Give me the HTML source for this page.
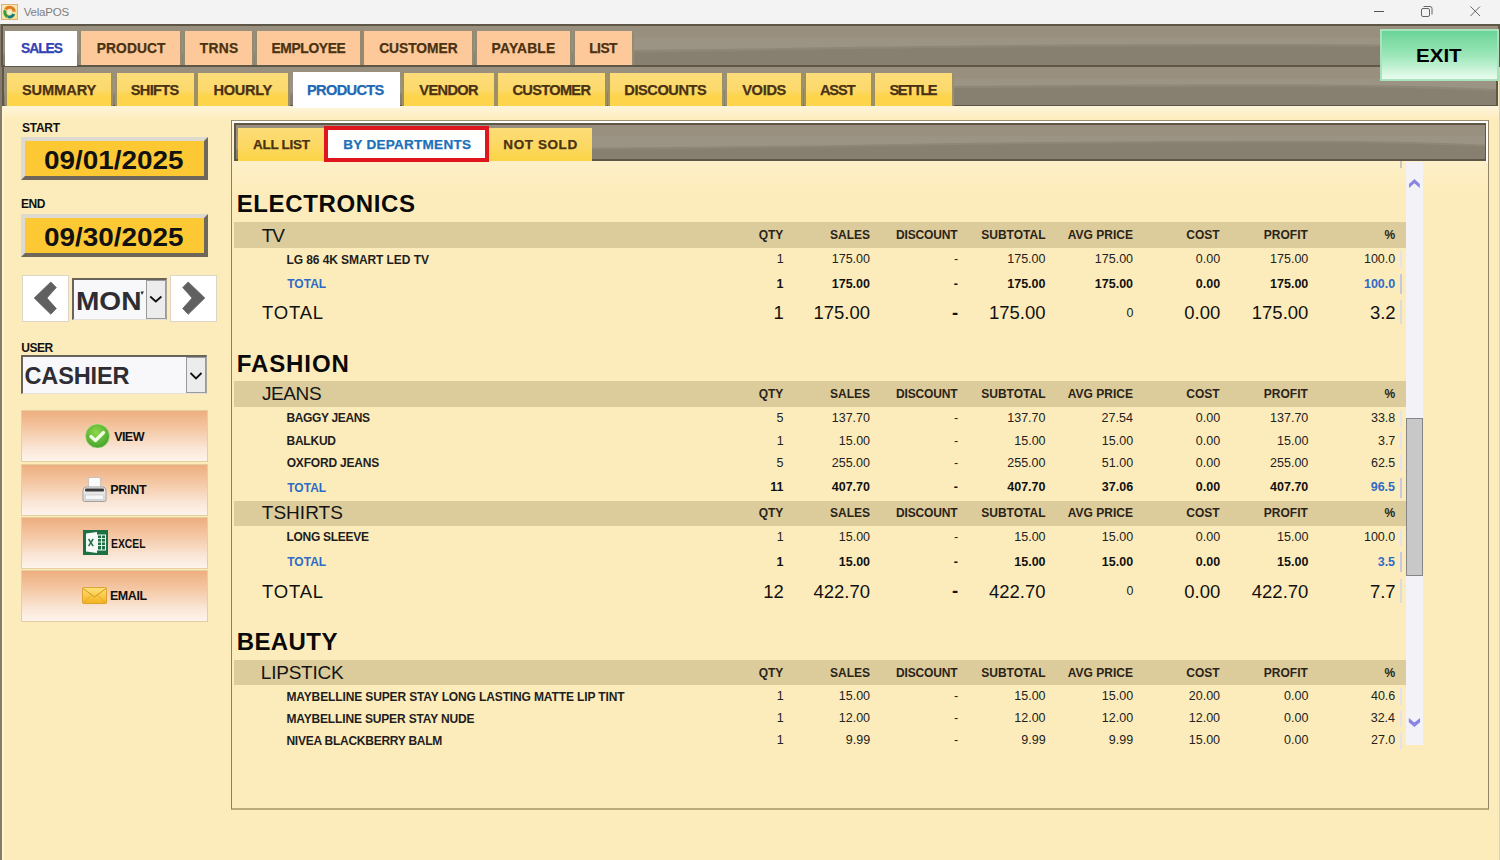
<!DOCTYPE html>
<html><head><meta charset="utf-8"><title>VelaPOS</title><style>
*{margin:0;padding:0;box-sizing:border-box}
html,body{width:1500px;height:860px;overflow:hidden}
body{position:relative;background:#fdecbb;font-family:'Liberation Sans', sans-serif}
</style></head>
<body>
<div style="position:absolute;left:0px;top:0px;width:1500px;height:24px;background:#f3f3f3"></div>
<svg style="position:absolute;left:1px;top:4px" width="17" height="16" viewBox="0 0 17 16">
<defs><linearGradient id="ig" x1="0" y1="0" x2="1" y2="1"><stop offset="0" stop-color="#fbe9c0"/><stop offset="1" stop-color="#f6dc8a"/></linearGradient></defs>
<rect x="0.5" y="0.5" width="16" height="15" fill="url(#ig)" stroke="#dcb27a" stroke-width="1"/>
<path d="M4.6 5.6 A4.6 4.6 0 0 1 13.2 7.6" fill="none" stroke="#e27c1e" stroke-width="3"/>
<path d="M12.8 10.2 A4.6 4.6 0 0 1 7.0 12.6" fill="none" stroke="#137a7a" stroke-width="3"/>
<path d="M6.8 12.6 A4.6 4.6 0 0 1 4.3 6.2" fill="none" stroke="#3a9a3a" stroke-width="3"/>
<circle cx="8.6" cy="8.4" r="1.6" fill="#e9f6ef"/>
</svg>
<div style="position:absolute;left:23.70px;top:7.27px;font:normal 11.5px/11.5px 'Liberation Sans', sans-serif;color:#808080;letter-spacing:-0.208px;white-space:nowrap;">VelaPOS</div>
<svg style="position:absolute;left:1360px;top:0px" width="140" height="24" viewBox="0 0 140 24">
<path d="M14 11.5 H24" stroke="#555" stroke-width="1"/>
<rect x="61.5" y="8.5" width="8" height="8" rx="1.5" fill="none" stroke="#666" stroke-width="1"/>
<path d="M63.5 6.5 H70 A2 2 0 0 1 72 8.5 V14.5" fill="none" stroke="#666" stroke-width="1"/>
<path d="M110.5 6.5 L120 16 M120 6.5 L110.5 16" stroke="#666" stroke-width="1"/>
</svg>
<div style="position:absolute;left:0px;top:24px;width:2px;height:836px;background:#867c6c"></div>
<div style="position:absolute;left:2px;top:106px;width:2px;height:754px;background:#fdf4d2"></div>
<div style="position:absolute;left:1499px;top:24px;width:1px;height:836px;background:#d8d0b8"></div>
<div style="position:absolute;left:4px;top:106px;width:1495px;height:14px;background:linear-gradient(to bottom,#fef5da,#fdecbb)"></div>
<div style="position:absolute;left:1px;top:24px;width:1499px;height:43px;overflow:hidden;border:2px solid #5e5646;border-bottom-width:2px"><svg width="100%" height="100%" viewBox="0 0 1000 100" preserveAspectRatio="none" style="position:absolute;left:0;top:0;display:block"><rect width="1000" height="100" fill="#9b9383"/><rect width="1000" height="30" fill="#988f7f"/><path d="M0 70 C200 70 350 66 500 58 C620 50 720 46 850 46 C920 46 970 52 1000 58 L1000 100 L0 100 Z" fill="#8f8776"/><path d="M0 76 C200 76 350 72 500 64 C620 56 720 52 850 52 C920 52 970 58 1000 64 L1000 100 L0 100 Z" fill="#877f6f"/></svg></div>
<div style="position:absolute;left:2px;top:66px;width:1496px;height:40px;overflow:hidden;border:2px solid #5e5646;border-top:1px solid #5e5646;border-bottom:1px solid #5e5646"><svg width="100%" height="100%" viewBox="0 0 1000 100" preserveAspectRatio="none" style="position:absolute;left:0;top:0;display:block"><rect width="1000" height="100" fill="#9b9383"/><rect width="1000" height="30" fill="#988f7f"/><path d="M0 70 C200 70 350 66 500 58 C620 50 720 46 850 46 C920 46 970 52 1000 58 L1000 100 L0 100 Z" fill="#8f8776"/><path d="M0 76 C200 76 350 72 500 64 C620 56 720 52 850 52 C920 52 970 58 1000 64 L1000 100 L0 100 Z" fill="#877f6f"/></svg></div>
<div style="position:absolute;left:5px;top:31px;width:72px;height:35px;background:#ffffff"></div>
<div style="position:absolute;left:21.10px;top:41.97px;font:bold 13.8px/13.8px 'Liberation Sans', sans-serif;color:#3242b4;letter-spacing:-1.050px;white-space:nowrap;-webkit-text-stroke:0.25px currentColor">SALES</div>
<div style="position:absolute;left:81px;top:31px;width:99px;height:34px;background:#fdc99a;box-shadow:2px 0 0 #968a6e,-2px 0 0 #968a6e"></div>
<div style="position:absolute;left:96.70px;top:41.97px;font:bold 13.8px/13.8px 'Liberation Sans', sans-serif;color:#4a3212;letter-spacing:0.100px;white-space:nowrap;-webkit-text-stroke:0.25px currentColor">PRODUCT</div>
<div style="position:absolute;left:185px;top:31px;width:67px;height:34px;background:#fdc99a;box-shadow:2px 0 0 #968a6e,-2px 0 0 #968a6e"></div>
<div style="position:absolute;left:199.75px;top:41.97px;font:bold 13.8px/13.8px 'Liberation Sans', sans-serif;color:#4a3212;letter-spacing:0.283px;white-space:nowrap;-webkit-text-stroke:0.25px currentColor">TRNS</div>
<div style="position:absolute;left:257px;top:31px;width:103px;height:34px;background:#fdc99a;box-shadow:2px 0 0 #968a6e,-2px 0 0 #968a6e"></div>
<div style="position:absolute;left:271.50px;top:41.97px;font:bold 13.8px/13.8px 'Liberation Sans', sans-serif;color:#4a3212;letter-spacing:-0.343px;white-space:nowrap;-webkit-text-stroke:0.25px currentColor">EMPLOYEE</div>
<div style="position:absolute;left:364px;top:31px;width:108px;height:34px;background:#fdc99a;box-shadow:2px 0 0 #968a6e,-2px 0 0 #968a6e"></div>
<div style="position:absolute;left:379.20px;top:41.97px;font:bold 13.8px/13.8px 'Liberation Sans', sans-serif;color:#4a3212;letter-spacing:-0.036px;white-space:nowrap;-webkit-text-stroke:0.25px currentColor">CUSTOMER</div>
<div style="position:absolute;left:477px;top:31px;width:93px;height:34px;background:#fdc99a;box-shadow:2px 0 0 #968a6e,-2px 0 0 #968a6e"></div>
<div style="position:absolute;left:491.60px;top:41.72px;font:bold 13.8px/13.8px 'Liberation Sans', sans-serif;color:#4a3212;letter-spacing:0.208px;white-space:nowrap;-webkit-text-stroke:0.25px currentColor">PAYABLE</div>
<div style="position:absolute;left:575px;top:31px;width:57px;height:34px;background:#fdc99a;box-shadow:2px 0 0 #968a6e,-2px 0 0 #968a6e"></div>
<div style="position:absolute;left:589.20px;top:41.97px;font:bold 13.8px/13.8px 'Liberation Sans', sans-serif;color:#4a3212;letter-spacing:-0.517px;white-space:nowrap;-webkit-text-stroke:0.25px currentColor">LIST</div>
<div style="position:absolute;left:7px;top:72.6px;width:104px;height:33.4px;background:linear-gradient(to bottom,#fddd7a 0%,#fcd96c 50%,#fdd449 72%,#fdd54c 100%);box-shadow:2px 0 0 #9d8f66,-2px 0 0 #9d8f66"></div>
<div style="position:absolute;left:21.90px;top:82.64px;font:bold 14.6px/14.6px 'Liberation Sans', sans-serif;color:#4a3212;letter-spacing:-0.067px;white-space:nowrap;-webkit-text-stroke:0.25px currentColor">SUMMARY</div>
<div style="position:absolute;left:117px;top:72.6px;width:77px;height:33.4px;background:linear-gradient(to bottom,#fddd7a 0%,#fcd96c 50%,#fdd449 72%,#fdd54c 100%);box-shadow:2px 0 0 #9d8f66,-2px 0 0 #9d8f66"></div>
<div style="position:absolute;left:130.80px;top:82.64px;font:bold 14.6px/14.6px 'Liberation Sans', sans-serif;color:#4a3212;letter-spacing:-0.670px;white-space:nowrap;-webkit-text-stroke:0.25px currentColor">SHIFTS</div>
<div style="position:absolute;left:198px;top:72.6px;width:90px;height:33.4px;background:linear-gradient(to bottom,#fddd7a 0%,#fcd96c 50%,#fdd449 72%,#fdd54c 100%);box-shadow:2px 0 0 #9d8f66,-2px 0 0 #9d8f66"></div>
<div style="position:absolute;left:213.40px;top:82.64px;font:bold 14.6px/14.6px 'Liberation Sans', sans-serif;color:#4a3212;letter-spacing:-0.280px;white-space:nowrap;-webkit-text-stroke:0.25px currentColor">HOURLY</div>
<div style="position:absolute;left:293px;top:72px;width:107px;height:36px;background:#ffffff"></div>
<div style="position:absolute;left:307.00px;top:82.64px;font:bold 14.6px/14.6px 'Liberation Sans', sans-serif;color:#2169b4;letter-spacing:-0.650px;white-space:nowrap;-webkit-text-stroke:0.25px currentColor">PRODUCTS</div>
<div style="position:absolute;left:404px;top:72.6px;width:90px;height:33.4px;background:linear-gradient(to bottom,#fddd7a 0%,#fcd96c 50%,#fdd449 72%,#fdd54c 100%);box-shadow:2px 0 0 #9d8f66,-2px 0 0 #9d8f66"></div>
<div style="position:absolute;left:419.35px;top:82.64px;font:bold 14.6px/14.6px 'Liberation Sans', sans-serif;color:#4a3212;letter-spacing:-0.650px;white-space:nowrap;-webkit-text-stroke:0.25px currentColor">VENDOR</div>
<div style="position:absolute;left:498px;top:72.6px;width:107px;height:33.4px;background:linear-gradient(to bottom,#fddd7a 0%,#fcd96c 50%,#fdd449 72%,#fdd54c 100%);box-shadow:2px 0 0 #9d8f66,-2px 0 0 #9d8f66"></div>
<div style="position:absolute;left:512.50px;top:82.64px;font:bold 14.6px/14.6px 'Liberation Sans', sans-serif;color:#4a3212;letter-spacing:-0.686px;white-space:nowrap;-webkit-text-stroke:0.25px currentColor">CUSTOMER</div>
<div style="position:absolute;left:610px;top:72.6px;width:112px;height:33.4px;background:linear-gradient(to bottom,#fddd7a 0%,#fcd96c 50%,#fdd449 72%,#fdd54c 100%);box-shadow:2px 0 0 #9d8f66,-2px 0 0 #9d8f66"></div>
<div style="position:absolute;left:624.30px;top:82.64px;font:bold 14.6px/14.6px 'Liberation Sans', sans-serif;color:#4a3212;letter-spacing:-0.438px;white-space:nowrap;-webkit-text-stroke:0.25px currentColor">DISCOUNTS</div>
<div style="position:absolute;left:727px;top:72.6px;width:74px;height:33.4px;background:linear-gradient(to bottom,#fddd7a 0%,#fcd96c 50%,#fdd449 72%,#fdd54c 100%);box-shadow:2px 0 0 #9d8f66,-2px 0 0 #9d8f66"></div>
<div style="position:absolute;left:742.15px;top:82.64px;font:bold 14.6px/14.6px 'Liberation Sans', sans-serif;color:#4a3212;letter-spacing:-0.300px;white-space:nowrap;-webkit-text-stroke:0.25px currentColor">VOIDS</div>
<div style="position:absolute;left:806px;top:72.6px;width:65px;height:33.4px;background:linear-gradient(to bottom,#fddd7a 0%,#fcd96c 50%,#fdd449 72%,#fdd54c 100%);box-shadow:2px 0 0 #9d8f66,-2px 0 0 #9d8f66"></div>
<div style="position:absolute;left:819.90px;top:82.64px;font:bold 14.6px/14.6px 'Liberation Sans', sans-serif;color:#4a3212;letter-spacing:-1.083px;white-space:nowrap;-webkit-text-stroke:0.25px currentColor">ASST</div>
<div style="position:absolute;left:875px;top:72.6px;width:77px;height:33.4px;background:linear-gradient(to bottom,#fddd7a 0%,#fcd96c 50%,#fdd449 72%,#fdd54c 100%);box-shadow:2px 0 0 #9d8f66,-2px 0 0 #9d8f66"></div>
<div style="position:absolute;left:889.60px;top:82.64px;font:bold 14.6px/14.6px 'Liberation Sans', sans-serif;color:#4a3212;letter-spacing:-1.600px;white-space:nowrap;-webkit-text-stroke:0.25px currentColor">SETTLE</div>
<div style="position:absolute;left:1380px;top:29px;width:119px;height:52px;background:linear-gradient(to bottom,#6ad497 0%,#9be6b7 50%,#e9fcef 100%);border:2px solid #a8e3bd"></div>
<div style="position:absolute;left:1416.43px;top:47.64px;font:bold 17.5px/17.5px 'Liberation Sans', sans-serif;color:#000;letter-spacing:0.000px;white-space:nowrap;transform:scaleX(1.1733);transform-origin:0 0;">EXIT</div>
<div style="position:absolute;left:22.00px;top:121.64px;font:bold 12px/12px 'Liberation Sans', sans-serif;color:#111;letter-spacing:-0.250px;white-space:nowrap;">START</div>
<div style="position:absolute;left:21px;top:136.5px;width:187px;height:43px;background:#fcc935;border-top:4px solid #dedad0;border-left:4px solid #dedad0;border-bottom:4px solid #6f685a;border-right:4px solid #6f685a"></div>
<div style="position:absolute;left:44.21px;top:147.91px;font:bold 25.5px/25.5px 'Liberation Sans', sans-serif;color:#111;letter-spacing:0.000px;white-space:nowrap;transform:scaleX(1.0937);transform-origin:0 0;">09/01/2025</div>
<div style="position:absolute;left:21.05px;top:197.69px;font:bold 12px/12px 'Liberation Sans', sans-serif;color:#111;letter-spacing:-0.500px;white-space:nowrap;">END</div>
<div style="position:absolute;left:21px;top:213.5px;width:187px;height:43px;background:#fcc935;border-top:4px solid #dedad0;border-left:4px solid #dedad0;border-bottom:4px solid #6f685a;border-right:4px solid #6f685a"></div>
<div style="position:absolute;left:44.21px;top:224.51px;font:bold 25.5px/25.5px 'Liberation Sans', sans-serif;color:#111;letter-spacing:0.000px;white-space:nowrap;transform:scaleX(1.0937);transform-origin:0 0;">09/30/2025</div>
<div style="position:absolute;left:22px;top:275px;width:47px;height:47px;background:#fff;border:1px solid #ddd6c6"></div>
<svg style="position:absolute;left:22px;top:275px" width="47" height="47" viewBox="0 0 47 47"><path d="M28.8 7 L34.3 12.5 L24.9 23 L34.3 33.5 L28.8 39.3 L12.2 23 Z" fill="#606060" stroke="#606060" stroke-width="0.8" stroke-linejoin="round"/></svg>
<div style="position:absolute;left:170px;top:275px;width:47px;height:47px;background:#fff;border:1px solid #ddd6c6"></div>
<svg style="position:absolute;left:170px;top:275px" width="47" height="47" viewBox="0 0 47 47"><path d="M18.2 7 L12.7 12.5 L22.1 23 L12.7 33.5 L18.2 39.3 L34.8 23 Z" fill="#606060" stroke="#606060" stroke-width="0.8" stroke-linejoin="round"/></svg>
<div style="position:absolute;left:72px;top:278px;width:95px;height:42px;background:#f8f8fa;border-top:2px solid #68645c;border-left:2px solid #68645c;border-right:1px solid #a9a59b;border-bottom:1px solid #e5e1d6;overflow:hidden"></div>
<div style="position:absolute;left:76.07px;top:288.90px;font:bold 25.4px/25.4px 'Liberation Sans', sans-serif;color:#2d2d33;letter-spacing:0.000px;white-space:nowrap;transform:scaleX(1.1049);transform-origin:0 0;">MON</div>
<svg style="position:absolute;left:140px;top:291px" width="6" height="6" viewBox="0 0 6 6"><path d="M0.5 0.5 H4 L2 4 Z" fill="#2d2d33"/></svg>
<div style="position:absolute;left:146px;top:280px;width:20px;height:39px;background:#ececec;border:1px solid #9a9a9a"></div>
<svg style="position:absolute;left:146px;top:280px" width="20" height="39" viewBox="0 0 20 39"><path d="M4.2 16.5 L9.8 21.5 L15.4 16.5" fill="none" stroke="#111" stroke-width="1.8"/></svg>
<div style="position:absolute;left:21.25px;top:341.74px;font:bold 12px/12px 'Liberation Sans', sans-serif;color:#111;letter-spacing:-0.483px;white-space:nowrap;">USER</div>
<div style="position:absolute;left:21px;top:355px;width:186px;height:39px;background:#f8f8fa;border-top:2px solid #68645c;border-left:2px solid #68645c;border-right:1px solid #a9a59b;border-bottom:1px solid #e5e1d6"></div>
<div style="position:absolute;left:24.50px;top:365.11px;font:bold 23.5px/23.5px 'Liberation Sans', sans-serif;color:#2d2d33;letter-spacing:-0.125px;white-space:nowrap;">CASHIER</div>
<div style="position:absolute;left:186px;top:357px;width:20px;height:36px;background:#ececec;border:1px solid #9a9a9a"></div>
<svg style="position:absolute;left:186px;top:357px" width="20" height="36" viewBox="0 0 20 36"><path d="M4.5 16 L10 21.5 L15.5 16" fill="none" stroke="#111" stroke-width="1.8"/></svg>
<div style="position:absolute;left:21px;top:410px;width:187px;height:52px;background:linear-gradient(to bottom,#eeae80 0%,#f4c7a3 35%,#fae6d6 75%,#fdf4ec 100%);border:1px solid #e6cf9f"></div>
<div style="position:absolute;left:21px;top:464px;width:187px;height:52px;background:linear-gradient(to bottom,#eeae80 0%,#f4c7a3 35%,#fae6d6 75%,#fdf4ec 100%);border:1px solid #e6cf9f"></div>
<div style="position:absolute;left:21px;top:517px;width:187px;height:52px;background:linear-gradient(to bottom,#eeae80 0%,#f4c7a3 35%,#fae6d6 75%,#fdf4ec 100%);border:1px solid #e6cf9f"></div>
<div style="position:absolute;left:21px;top:570px;width:187px;height:52px;background:linear-gradient(to bottom,#eeae80 0%,#f4c7a3 35%,#fae6d6 75%,#fdf4ec 100%);border:1px solid #e6cf9f"></div>
<svg style="position:absolute;left:84px;top:423px" width="27" height="27" viewBox="0 0 27 27">
<defs><radialGradient id="gc" cx="0.45" cy="0.35" r="0.7"><stop offset="0" stop-color="#8fd84a"/><stop offset="1" stop-color="#3f9f2b"/></radialGradient></defs>
<circle cx="13.5" cy="13" r="12" fill="url(#gc)" stroke="#c9e9a0" stroke-width="0.6"/>
<path d="M7 13.5 L11.5 17.5 L19.5 9.5" fill="none" stroke="#f4ffe8" stroke-width="3.2" stroke-linecap="round" stroke-linejoin="round"/>
</svg>
<div style="position:absolute;left:114.20px;top:430.87px;font:bold 12.5px/12.5px 'Liberation Sans', sans-serif;color:#111;letter-spacing:-0.567px;white-space:nowrap;">VIEW</div>
<svg style="position:absolute;left:81px;top:476px" width="27" height="27" viewBox="0 0 27 27">
<defs><linearGradient id="pg" x1="0" y1="0" x2="0" y2="1"><stop offset="0" stop-color="#f2f2f2"/><stop offset="1" stop-color="#d6d6d6"/></linearGradient></defs>
<path d="M7.5 12 V3 Q7.5 1.5 9 1.5 H18 Q19.5 1.5 19.5 3 V12 Z" fill="#fbfbfb" stroke="#bdbdbd" stroke-width="0.8"/>
<path d="M2 15 Q2 11 5 11 H22 Q25 11 25 15 V24 Q25 25.5 23.5 25.5 H3.5 Q2 25.5 2 24 Z" fill="url(#pg)" stroke="#9a9a9a" stroke-width="0.9"/>
<rect x="4" y="12.5" width="19" height="3" rx="1" fill="#3a3a3a"/>
<rect x="4.5" y="19" width="18" height="4.5" fill="#f7f7f7" stroke="#c4c4c4" stroke-width="0.6"/>
</svg>
<div style="position:absolute;left:110.15px;top:484.37px;font:bold 12.5px/12.5px 'Liberation Sans', sans-serif;color:#111;letter-spacing:-0.238px;white-space:nowrap;">PRINT</div>
<svg style="position:absolute;left:83px;top:530px" width="26" height="25" viewBox="0 0 26 25">
<rect x="0" y="0" width="25" height="25" fill="#1e7145"/>
<path d="M3 3.5 L14 2 V23 L3 21.5 Z" fill="#f6fbf7"/>
<path d="M5.6 9 L10.2 16.2 M10.2 9 L5.6 16.2" stroke="#1e7145" stroke-width="1.5"/>
<rect x="14.5" y="5" width="8" height="15" fill="none" stroke="#f6fbf7" stroke-width="1"/>
<path d="M18.5 5 V20 M14.5 8.5 H22.5 M14.5 12 H22.5 M14.5 15.5 H22.5" stroke="#f6fbf7" stroke-width="0.9"/>
</svg>
<div style="position:absolute;left:111.27px;top:537.79px;font:bold 12.3px/12.3px 'Liberation Sans', sans-serif;color:#111;letter-spacing:0.000px;white-space:nowrap;transform:scaleX(0.8425);transform-origin:0 0;">EXCEL</div>
<svg style="position:absolute;left:82px;top:587px" width="25" height="17" viewBox="0 0 25 17">
<defs><linearGradient id="eg" x1="0" y1="0" x2="0" y2="1"><stop offset="0" stop-color="#fde37a"/><stop offset="1" stop-color="#f3b21c"/></linearGradient></defs>
<rect x="0.5" y="0.5" width="24" height="16" rx="1" fill="url(#eg)" stroke="#d9981a" stroke-width="0.8"/>
<path d="M1 1.5 L12.5 10 L24 1.5" fill="none" stroke="#d08e14" stroke-width="0.9"/>
<path d="M1 16 L9.5 8.5 M24 16 L15.5 8.5" fill="none" stroke="#e2a52a" stroke-width="0.7"/>
</svg>
<div style="position:absolute;left:109.95px;top:590.17px;font:bold 12.5px/12.5px 'Liberation Sans', sans-serif;color:#111;letter-spacing:-0.438px;white-space:nowrap;">EMAIL</div>
<div style="position:absolute;left:231px;top:120px;width:1258px;height:690px;border:1px solid #9c9170;border-left-color:#8e8158;border-right-color:#8f8566;border-bottom:2px solid #bcab7a;background:linear-gradient(to bottom,#fdf5dc 0px,#fdecbb 70px)"></div>
<div style="position:absolute;left:232px;top:121px;width:1256px;height:2px;background:#ffffff"></div>
<div style="position:absolute;left:1486px;top:121px;width:2px;height:42px;background:#fffdf6"></div>
<div style="position:absolute;left:234px;top:123px;width:1252px;height:38px;overflow:hidden;border:2px solid #5e5646;border-right-width:1px"><svg width="100%" height="100%" viewBox="0 0 1000 100" preserveAspectRatio="none" style="position:absolute;left:0;top:0;display:block"><rect width="1000" height="100" fill="#9b9383"/><rect width="1000" height="30" fill="#988f7f"/><path d="M0 70 C200 70 350 66 500 58 C620 50 720 46 850 46 C920 46 970 52 1000 58 L1000 100 L0 100 Z" fill="#8f8776"/><path d="M0 76 C200 76 350 72 500 64 C620 56 720 52 850 52 C920 52 970 58 1000 64 L1000 100 L0 100 Z" fill="#877f6f"/></svg></div>
<div style="position:absolute;left:238px;top:128px;width:86px;height:33px;background:linear-gradient(to bottom,#fcdc78 0%,#fcd862 55%,#fdd445 100%)"></div>
<div style="position:absolute;left:252.95px;top:137.87px;font:bold 13.5px/13.5px 'Liberation Sans', sans-serif;color:#4a3212;letter-spacing:-0.279px;white-space:nowrap;-webkit-text-stroke:0.25px currentColor">ALL LIST</div>
<div style="position:absolute;left:324px;top:126px;width:165px;height:36px;background:#fff;border:4px solid #e0161e"></div>
<div style="position:absolute;left:343.30px;top:137.87px;font:bold 13.5px/13.5px 'Liberation Sans', sans-serif;color:#2070b8;letter-spacing:0.281px;white-space:nowrap;-webkit-text-stroke:0.25px currentColor">BY DEPARTMENTS</div>
<div style="position:absolute;left:489px;top:128px;width:103px;height:33px;background:linear-gradient(to bottom,#fcdc78 0%,#fcd862 55%,#fdd445 100%)"></div>
<div style="position:absolute;left:503.30px;top:137.87px;font:bold 13.5px/13.5px 'Liberation Sans', sans-serif;color:#4a3212;letter-spacing:0.593px;white-space:nowrap;-webkit-text-stroke:0.25px currentColor">NOT SOLD</div>
<div style="position:absolute;left:1406px;top:162px;width:17px;height:583px;background:#f3f2f6"></div>
<svg style="position:absolute;left:1406px;top:175px" width="17" height="16" viewBox="0 0 17 16"><path d="M3 9 L8.4 4 L13.8 9 L13.8 13 L8.4 8.3 L3 13 Z" fill="#8a85e2"/></svg>
<svg style="position:absolute;left:1406px;top:712px" width="17" height="16" viewBox="0 0 17 16"><path d="M2.8 6.1 L8.4 10.6 L14.1 6.1 L14.1 10.3 L8.4 14.9 L2.8 10.3 Z" fill="#8a85e2"/></svg>
<div style="position:absolute;left:1406px;top:418px;width:17px;height:158px;background:#c8c8c8;border:1px solid #858585"></div>
<div style="position:absolute;left:1400px;top:161px;width:2px;height:7px;background:#cfc8b4"></div>
<div style="position:absolute;left:236.70px;top:192.33px;font:bold 24px/24px 'Liberation Sans', sans-serif;color:#0a0a0a;letter-spacing:0.620px;white-space:nowrap;">ELECTRONICS</div>
<div style="position:absolute;left:234px;top:222.2px;width:1172px;height:25.5px;background:#dccb9b"></div>
<div style="position:absolute;left:261.80px;top:225.67px;font:normal 19px/19px 'Liberation Sans', sans-serif;color:#141414;letter-spacing:-1.050px;white-space:nowrap;">TV</div>
<div style="position:absolute;left:758.80px;top:228.94px;font:bold 12px/12px 'Liberation Sans', sans-serif;color:#2a2418;letter-spacing:-0.150px;white-space:nowrap;">QTY</div>
<div style="position:absolute;left:830.00px;top:228.94px;font:bold 12px/12px 'Liberation Sans', sans-serif;color:#2a2418;letter-spacing:0.000px;white-space:nowrap;">SALES</div>
<div style="position:absolute;left:895.95px;top:228.94px;font:bold 12px/12px 'Liberation Sans', sans-serif;color:#2a2418;letter-spacing:-0.136px;white-space:nowrap;">DISCOUNT</div>
<div style="position:absolute;left:981.25px;top:228.94px;font:bold 12px/12px 'Liberation Sans', sans-serif;color:#2a2418;letter-spacing:0.000px;white-space:nowrap;">SUBTOTAL</div>
<div style="position:absolute;left:1067.85px;top:228.94px;font:bold 12px/12px 'Liberation Sans', sans-serif;color:#2a2418;letter-spacing:0.000px;white-space:nowrap;">AVG PRICE</div>
<div style="position:absolute;left:1186.25px;top:228.94px;font:bold 12px/12px 'Liberation Sans', sans-serif;color:#2a2418;letter-spacing:0.000px;white-space:nowrap;">COST</div>
<div style="position:absolute;left:1263.80px;top:228.94px;font:bold 12px/12px 'Liberation Sans', sans-serif;color:#2a2418;letter-spacing:0.000px;white-space:nowrap;">PROFIT</div>
<div style="position:absolute;left:1384.45px;top:228.94px;font:bold 12px/12px 'Liberation Sans', sans-serif;color:#2a2418;letter-spacing:0.000px;white-space:nowrap;">%</div>
<div style="position:absolute;left:286.45px;top:253.64px;font:bold 12px/12px 'Liberation Sans', sans-serif;color:#1e1e1e;letter-spacing:-0.078px;white-space:nowrap;">LG 86 4K SMART LED TV</div>
<div style="position:absolute;left:776.75px;top:253.12px;font:normal 12.5px/12.5px 'Liberation Sans', sans-serif;color:#222;letter-spacing:0.000px;white-space:nowrap;">1</div>
<div style="position:absolute;left:831.75px;top:253.12px;font:normal 12.5px/12.5px 'Liberation Sans', sans-serif;color:#222;letter-spacing:0.000px;white-space:nowrap;">175.00</div>
<div style="position:absolute;left:954.00px;top:253.12px;font:normal 12.5px/12.5px 'Liberation Sans', sans-serif;color:#222;letter-spacing:0.000px;white-space:nowrap;">-</div>
<div style="position:absolute;left:1007.25px;top:253.12px;font:normal 12.5px/12.5px 'Liberation Sans', sans-serif;color:#222;letter-spacing:0.000px;white-space:nowrap;">175.00</div>
<div style="position:absolute;left:1094.85px;top:253.12px;font:normal 12.5px/12.5px 'Liberation Sans', sans-serif;color:#222;letter-spacing:0.000px;white-space:nowrap;">175.00</div>
<div style="position:absolute;left:1195.75px;top:253.12px;font:normal 12.5px/12.5px 'Liberation Sans', sans-serif;color:#222;letter-spacing:0.000px;white-space:nowrap;">0.00</div>
<div style="position:absolute;left:1270.05px;top:253.12px;font:normal 12.5px/12.5px 'Liberation Sans', sans-serif;color:#222;letter-spacing:0.000px;white-space:nowrap;">175.00</div>
<div style="position:absolute;left:1363.95px;top:253.12px;font:normal 12.5px/12.5px 'Liberation Sans', sans-serif;color:#222;letter-spacing:0.000px;white-space:nowrap;">100.0</div>
<div style="position:absolute;left:1400px;top:250.7px;width:2px;height:17px;background:#e3e2ee"></div>
<div style="position:absolute;left:287.20px;top:278.24px;font:bold 12px/12px 'Liberation Sans', sans-serif;color:#2f6bc6;letter-spacing:0.025px;white-space:nowrap;">TOTAL</div>
<div style="position:absolute;left:776.50px;top:277.72px;font:bold 12.5px/12.5px 'Liberation Sans', sans-serif;color:#111;letter-spacing:0.000px;white-space:nowrap;">1</div>
<div style="position:absolute;left:831.75px;top:277.72px;font:bold 12.5px/12.5px 'Liberation Sans', sans-serif;color:#111;letter-spacing:0.000px;white-space:nowrap;">175.00</div>
<div style="position:absolute;left:953.75px;top:277.72px;font:bold 12.5px/12.5px 'Liberation Sans', sans-serif;color:#111;letter-spacing:0.000px;white-space:nowrap;">-</div>
<div style="position:absolute;left:1007.25px;top:277.72px;font:bold 12.5px/12.5px 'Liberation Sans', sans-serif;color:#111;letter-spacing:0.000px;white-space:nowrap;">175.00</div>
<div style="position:absolute;left:1094.85px;top:277.72px;font:bold 12.5px/12.5px 'Liberation Sans', sans-serif;color:#111;letter-spacing:0.000px;white-space:nowrap;">175.00</div>
<div style="position:absolute;left:1195.75px;top:277.72px;font:bold 12.5px/12.5px 'Liberation Sans', sans-serif;color:#111;letter-spacing:0.000px;white-space:nowrap;">0.00</div>
<div style="position:absolute;left:1270.05px;top:277.72px;font:bold 12.5px/12.5px 'Liberation Sans', sans-serif;color:#111;letter-spacing:0.000px;white-space:nowrap;">175.00</div>
<div style="position:absolute;left:1363.95px;top:277.72px;font:bold 12.5px/12.5px 'Liberation Sans', sans-serif;color:#2f6bc6;letter-spacing:0.000px;white-space:nowrap;">100.0</div>
<div style="position:absolute;left:1400px;top:274.3px;width:2px;height:20px;background:#c7c6e3"></div>
<div style="position:absolute;left:262.00px;top:304.24px;font:normal 18.5px/18.5px 'Liberation Sans', sans-serif;color:#111;letter-spacing:0.812px;white-space:nowrap;">TOTAL</div>
<div style="position:absolute;left:773.50px;top:304.49px;font:normal 18.5px/18.5px 'Liberation Sans', sans-serif;color:#111;letter-spacing:0.000px;white-space:nowrap;">1</div>
<div style="position:absolute;left:813.50px;top:304.49px;font:normal 18.5px/18.5px 'Liberation Sans', sans-serif;color:#111;letter-spacing:0.000px;white-space:nowrap;">175.00</div>
<div style="position:absolute;left:952.00px;top:303.79px;font:bold 18.5px/18.5px 'Liberation Sans', sans-serif;color:#111;letter-spacing:0.000px;white-space:nowrap;">-</div>
<div style="position:absolute;left:989.00px;top:304.49px;font:normal 18.5px/18.5px 'Liberation Sans', sans-serif;color:#111;letter-spacing:0.000px;white-space:nowrap;">175.00</div>
<div style="position:absolute;left:1125.60px;top:305.87px;font:normal 13.5px/13.5px 'Liberation Sans', sans-serif;color:#222;letter-spacing:0.000px;white-space:nowrap;transform:scaleX(0.92);transform-origin:right">0</div>
<div style="position:absolute;left:1184.25px;top:304.49px;font:normal 18.5px/18.5px 'Liberation Sans', sans-serif;color:#111;letter-spacing:0.000px;white-space:nowrap;">0.00</div>
<div style="position:absolute;left:1251.80px;top:304.49px;font:normal 18.5px/18.5px 'Liberation Sans', sans-serif;color:#111;letter-spacing:0.000px;white-space:nowrap;">175.00</div>
<div style="position:absolute;left:1369.95px;top:304.49px;font:normal 18.5px/18.5px 'Liberation Sans', sans-serif;color:#111;letter-spacing:0.000px;white-space:nowrap;">3.2</div>
<div style="position:absolute;left:1400px;top:300.2px;width:2px;height:24px;background:#dcdadf"></div>
<div style="position:absolute;left:236.70px;top:352.23px;font:bold 24px/24px 'Liberation Sans', sans-serif;color:#0a0a0a;letter-spacing:0.917px;white-space:nowrap;">FASHION</div>
<div style="position:absolute;left:234px;top:381.3px;width:1172px;height:25.5px;background:#dccb9b"></div>
<div style="position:absolute;left:262.05px;top:384.17px;font:normal 19px/19px 'Liberation Sans', sans-serif;color:#141414;letter-spacing:-0.425px;white-space:nowrap;">JEANS</div>
<div style="position:absolute;left:758.80px;top:388.04px;font:bold 12px/12px 'Liberation Sans', sans-serif;color:#2a2418;letter-spacing:-0.150px;white-space:nowrap;">QTY</div>
<div style="position:absolute;left:830.00px;top:388.04px;font:bold 12px/12px 'Liberation Sans', sans-serif;color:#2a2418;letter-spacing:0.000px;white-space:nowrap;">SALES</div>
<div style="position:absolute;left:895.95px;top:388.04px;font:bold 12px/12px 'Liberation Sans', sans-serif;color:#2a2418;letter-spacing:-0.136px;white-space:nowrap;">DISCOUNT</div>
<div style="position:absolute;left:981.25px;top:388.04px;font:bold 12px/12px 'Liberation Sans', sans-serif;color:#2a2418;letter-spacing:0.000px;white-space:nowrap;">SUBTOTAL</div>
<div style="position:absolute;left:1067.85px;top:388.04px;font:bold 12px/12px 'Liberation Sans', sans-serif;color:#2a2418;letter-spacing:0.000px;white-space:nowrap;">AVG PRICE</div>
<div style="position:absolute;left:1186.25px;top:388.04px;font:bold 12px/12px 'Liberation Sans', sans-serif;color:#2a2418;letter-spacing:0.000px;white-space:nowrap;">COST</div>
<div style="position:absolute;left:1263.80px;top:388.04px;font:bold 12px/12px 'Liberation Sans', sans-serif;color:#2a2418;letter-spacing:0.000px;white-space:nowrap;">PROFIT</div>
<div style="position:absolute;left:1384.45px;top:388.04px;font:bold 12px/12px 'Liberation Sans', sans-serif;color:#2a2418;letter-spacing:0.000px;white-space:nowrap;">%</div>
<div style="position:absolute;left:286.45px;top:412.44px;font:bold 12px/12px 'Liberation Sans', sans-serif;color:#1e1e1e;letter-spacing:-0.355px;white-space:nowrap;">BAGGY JEANS</div>
<div style="position:absolute;left:776.50px;top:411.92px;font:normal 12.5px/12.5px 'Liberation Sans', sans-serif;color:#222;letter-spacing:0.000px;white-space:nowrap;">5</div>
<div style="position:absolute;left:831.75px;top:411.92px;font:normal 12.5px/12.5px 'Liberation Sans', sans-serif;color:#222;letter-spacing:0.000px;white-space:nowrap;">137.70</div>
<div style="position:absolute;left:954.00px;top:411.92px;font:normal 12.5px/12.5px 'Liberation Sans', sans-serif;color:#222;letter-spacing:0.000px;white-space:nowrap;">-</div>
<div style="position:absolute;left:1007.25px;top:411.92px;font:normal 12.5px/12.5px 'Liberation Sans', sans-serif;color:#222;letter-spacing:0.000px;white-space:nowrap;">137.70</div>
<div style="position:absolute;left:1101.60px;top:411.92px;font:normal 12.5px/12.5px 'Liberation Sans', sans-serif;color:#222;letter-spacing:0.000px;white-space:nowrap;">27.54</div>
<div style="position:absolute;left:1195.75px;top:411.92px;font:normal 12.5px/12.5px 'Liberation Sans', sans-serif;color:#222;letter-spacing:0.000px;white-space:nowrap;">0.00</div>
<div style="position:absolute;left:1270.05px;top:411.92px;font:normal 12.5px/12.5px 'Liberation Sans', sans-serif;color:#222;letter-spacing:0.000px;white-space:nowrap;">137.70</div>
<div style="position:absolute;left:1370.95px;top:411.92px;font:normal 12.5px/12.5px 'Liberation Sans', sans-serif;color:#222;letter-spacing:0.000px;white-space:nowrap;">33.8</div>
<div style="position:absolute;left:1400px;top:409.5px;width:2px;height:17px;background:#e3e2ee"></div>
<div style="position:absolute;left:286.45px;top:434.89px;font:bold 12px/12px 'Liberation Sans', sans-serif;color:#1e1e1e;letter-spacing:-0.220px;white-space:nowrap;">BALKUD</div>
<div style="position:absolute;left:776.75px;top:434.62px;font:normal 12.5px/12.5px 'Liberation Sans', sans-serif;color:#222;letter-spacing:0.000px;white-space:nowrap;">1</div>
<div style="position:absolute;left:838.75px;top:434.62px;font:normal 12.5px/12.5px 'Liberation Sans', sans-serif;color:#222;letter-spacing:0.000px;white-space:nowrap;">15.00</div>
<div style="position:absolute;left:954.00px;top:434.62px;font:normal 12.5px/12.5px 'Liberation Sans', sans-serif;color:#222;letter-spacing:0.000px;white-space:nowrap;">-</div>
<div style="position:absolute;left:1014.25px;top:434.62px;font:normal 12.5px/12.5px 'Liberation Sans', sans-serif;color:#222;letter-spacing:0.000px;white-space:nowrap;">15.00</div>
<div style="position:absolute;left:1101.85px;top:434.62px;font:normal 12.5px/12.5px 'Liberation Sans', sans-serif;color:#222;letter-spacing:0.000px;white-space:nowrap;">15.00</div>
<div style="position:absolute;left:1195.75px;top:434.62px;font:normal 12.5px/12.5px 'Liberation Sans', sans-serif;color:#222;letter-spacing:0.000px;white-space:nowrap;">0.00</div>
<div style="position:absolute;left:1277.05px;top:434.62px;font:normal 12.5px/12.5px 'Liberation Sans', sans-serif;color:#222;letter-spacing:0.000px;white-space:nowrap;">15.00</div>
<div style="position:absolute;left:1377.95px;top:434.62px;font:normal 12.5px/12.5px 'Liberation Sans', sans-serif;color:#222;letter-spacing:0.000px;white-space:nowrap;">3.7</div>
<div style="position:absolute;left:1400px;top:432.2px;width:2px;height:17px;background:#e3e2ee"></div>
<div style="position:absolute;left:286.70px;top:457.04px;font:bold 12px/12px 'Liberation Sans', sans-serif;color:#1e1e1e;letter-spacing:-0.186px;white-space:nowrap;">OXFORD JEANS</div>
<div style="position:absolute;left:776.50px;top:456.52px;font:normal 12.5px/12.5px 'Liberation Sans', sans-serif;color:#222;letter-spacing:0.000px;white-space:nowrap;">5</div>
<div style="position:absolute;left:831.75px;top:456.52px;font:normal 12.5px/12.5px 'Liberation Sans', sans-serif;color:#222;letter-spacing:0.000px;white-space:nowrap;">255.00</div>
<div style="position:absolute;left:954.00px;top:456.52px;font:normal 12.5px/12.5px 'Liberation Sans', sans-serif;color:#222;letter-spacing:0.000px;white-space:nowrap;">-</div>
<div style="position:absolute;left:1007.25px;top:456.52px;font:normal 12.5px/12.5px 'Liberation Sans', sans-serif;color:#222;letter-spacing:0.000px;white-space:nowrap;">255.00</div>
<div style="position:absolute;left:1101.85px;top:456.52px;font:normal 12.5px/12.5px 'Liberation Sans', sans-serif;color:#222;letter-spacing:0.000px;white-space:nowrap;">51.00</div>
<div style="position:absolute;left:1195.75px;top:456.52px;font:normal 12.5px/12.5px 'Liberation Sans', sans-serif;color:#222;letter-spacing:0.000px;white-space:nowrap;">0.00</div>
<div style="position:absolute;left:1270.05px;top:456.52px;font:normal 12.5px/12.5px 'Liberation Sans', sans-serif;color:#222;letter-spacing:0.000px;white-space:nowrap;">255.00</div>
<div style="position:absolute;left:1370.95px;top:456.52px;font:normal 12.5px/12.5px 'Liberation Sans', sans-serif;color:#222;letter-spacing:0.000px;white-space:nowrap;">62.5</div>
<div style="position:absolute;left:1400px;top:454.1px;width:2px;height:17px;background:#e3e2ee"></div>
<div style="position:absolute;left:287.20px;top:481.94px;font:bold 12px/12px 'Liberation Sans', sans-serif;color:#2f6bc6;letter-spacing:0.025px;white-space:nowrap;">TOTAL</div>
<div style="position:absolute;left:770.25px;top:481.42px;font:bold 12.5px/12.5px 'Liberation Sans', sans-serif;color:#111;letter-spacing:0.000px;white-space:nowrap;">11</div>
<div style="position:absolute;left:831.75px;top:481.42px;font:bold 12.5px/12.5px 'Liberation Sans', sans-serif;color:#111;letter-spacing:0.000px;white-space:nowrap;">407.70</div>
<div style="position:absolute;left:953.75px;top:481.42px;font:bold 12.5px/12.5px 'Liberation Sans', sans-serif;color:#111;letter-spacing:0.000px;white-space:nowrap;">-</div>
<div style="position:absolute;left:1007.25px;top:481.42px;font:bold 12.5px/12.5px 'Liberation Sans', sans-serif;color:#111;letter-spacing:0.000px;white-space:nowrap;">407.70</div>
<div style="position:absolute;left:1101.85px;top:481.42px;font:bold 12.5px/12.5px 'Liberation Sans', sans-serif;color:#111;letter-spacing:0.000px;white-space:nowrap;">37.06</div>
<div style="position:absolute;left:1195.75px;top:481.42px;font:bold 12.5px/12.5px 'Liberation Sans', sans-serif;color:#111;letter-spacing:0.000px;white-space:nowrap;">0.00</div>
<div style="position:absolute;left:1270.05px;top:481.42px;font:bold 12.5px/12.5px 'Liberation Sans', sans-serif;color:#111;letter-spacing:0.000px;white-space:nowrap;">407.70</div>
<div style="position:absolute;left:1370.70px;top:481.42px;font:bold 12.5px/12.5px 'Liberation Sans', sans-serif;color:#2f6bc6;letter-spacing:0.000px;white-space:nowrap;">96.5</div>
<div style="position:absolute;left:1400px;top:478px;width:2px;height:20px;background:#c7c6e3"></div>
<div style="position:absolute;left:234px;top:500.5px;width:1172px;height:25.5px;background:#dccb9b"></div>
<div style="position:absolute;left:261.80px;top:503.47px;font:normal 19px/19px 'Liberation Sans', sans-serif;color:#141414;letter-spacing:0.017px;white-space:nowrap;">TSHIRTS</div>
<div style="position:absolute;left:758.80px;top:507.24px;font:bold 12px/12px 'Liberation Sans', sans-serif;color:#2a2418;letter-spacing:-0.150px;white-space:nowrap;">QTY</div>
<div style="position:absolute;left:830.00px;top:507.24px;font:bold 12px/12px 'Liberation Sans', sans-serif;color:#2a2418;letter-spacing:0.000px;white-space:nowrap;">SALES</div>
<div style="position:absolute;left:895.95px;top:507.24px;font:bold 12px/12px 'Liberation Sans', sans-serif;color:#2a2418;letter-spacing:-0.136px;white-space:nowrap;">DISCOUNT</div>
<div style="position:absolute;left:981.25px;top:507.24px;font:bold 12px/12px 'Liberation Sans', sans-serif;color:#2a2418;letter-spacing:0.000px;white-space:nowrap;">SUBTOTAL</div>
<div style="position:absolute;left:1067.85px;top:507.24px;font:bold 12px/12px 'Liberation Sans', sans-serif;color:#2a2418;letter-spacing:0.000px;white-space:nowrap;">AVG PRICE</div>
<div style="position:absolute;left:1186.25px;top:507.24px;font:bold 12px/12px 'Liberation Sans', sans-serif;color:#2a2418;letter-spacing:0.000px;white-space:nowrap;">COST</div>
<div style="position:absolute;left:1263.80px;top:507.24px;font:bold 12px/12px 'Liberation Sans', sans-serif;color:#2a2418;letter-spacing:0.000px;white-space:nowrap;">PROFIT</div>
<div style="position:absolute;left:1384.45px;top:507.24px;font:bold 12px/12px 'Liberation Sans', sans-serif;color:#2a2418;letter-spacing:0.000px;white-space:nowrap;">%</div>
<div style="position:absolute;left:286.45px;top:531.44px;font:bold 12px/12px 'Liberation Sans', sans-serif;color:#1e1e1e;letter-spacing:-0.285px;white-space:nowrap;">LONG SLEEVE</div>
<div style="position:absolute;left:776.75px;top:530.92px;font:normal 12.5px/12.5px 'Liberation Sans', sans-serif;color:#222;letter-spacing:0.000px;white-space:nowrap;">1</div>
<div style="position:absolute;left:838.75px;top:530.92px;font:normal 12.5px/12.5px 'Liberation Sans', sans-serif;color:#222;letter-spacing:0.000px;white-space:nowrap;">15.00</div>
<div style="position:absolute;left:954.00px;top:530.92px;font:normal 12.5px/12.5px 'Liberation Sans', sans-serif;color:#222;letter-spacing:0.000px;white-space:nowrap;">-</div>
<div style="position:absolute;left:1014.25px;top:530.92px;font:normal 12.5px/12.5px 'Liberation Sans', sans-serif;color:#222;letter-spacing:0.000px;white-space:nowrap;">15.00</div>
<div style="position:absolute;left:1101.85px;top:530.92px;font:normal 12.5px/12.5px 'Liberation Sans', sans-serif;color:#222;letter-spacing:0.000px;white-space:nowrap;">15.00</div>
<div style="position:absolute;left:1195.75px;top:530.92px;font:normal 12.5px/12.5px 'Liberation Sans', sans-serif;color:#222;letter-spacing:0.000px;white-space:nowrap;">0.00</div>
<div style="position:absolute;left:1277.05px;top:530.92px;font:normal 12.5px/12.5px 'Liberation Sans', sans-serif;color:#222;letter-spacing:0.000px;white-space:nowrap;">15.00</div>
<div style="position:absolute;left:1363.95px;top:530.92px;font:normal 12.5px/12.5px 'Liberation Sans', sans-serif;color:#222;letter-spacing:0.000px;white-space:nowrap;">100.0</div>
<div style="position:absolute;left:1400px;top:528.5px;width:2px;height:17px;background:#e3e2ee"></div>
<div style="position:absolute;left:287.20px;top:556.34px;font:bold 12px/12px 'Liberation Sans', sans-serif;color:#2f6bc6;letter-spacing:0.025px;white-space:nowrap;">TOTAL</div>
<div style="position:absolute;left:776.50px;top:555.82px;font:bold 12.5px/12.5px 'Liberation Sans', sans-serif;color:#111;letter-spacing:0.000px;white-space:nowrap;">1</div>
<div style="position:absolute;left:838.75px;top:555.82px;font:bold 12.5px/12.5px 'Liberation Sans', sans-serif;color:#111;letter-spacing:0.000px;white-space:nowrap;">15.00</div>
<div style="position:absolute;left:953.75px;top:555.82px;font:bold 12.5px/12.5px 'Liberation Sans', sans-serif;color:#111;letter-spacing:0.000px;white-space:nowrap;">-</div>
<div style="position:absolute;left:1014.25px;top:555.82px;font:bold 12.5px/12.5px 'Liberation Sans', sans-serif;color:#111;letter-spacing:0.000px;white-space:nowrap;">15.00</div>
<div style="position:absolute;left:1101.85px;top:555.82px;font:bold 12.5px/12.5px 'Liberation Sans', sans-serif;color:#111;letter-spacing:0.000px;white-space:nowrap;">15.00</div>
<div style="position:absolute;left:1195.75px;top:555.82px;font:bold 12.5px/12.5px 'Liberation Sans', sans-serif;color:#111;letter-spacing:0.000px;white-space:nowrap;">0.00</div>
<div style="position:absolute;left:1277.05px;top:555.82px;font:bold 12.5px/12.5px 'Liberation Sans', sans-serif;color:#111;letter-spacing:0.000px;white-space:nowrap;">15.00</div>
<div style="position:absolute;left:1377.70px;top:555.82px;font:bold 12.5px/12.5px 'Liberation Sans', sans-serif;color:#2f6bc6;letter-spacing:0.000px;white-space:nowrap;">3.5</div>
<div style="position:absolute;left:1400px;top:552.4px;width:2px;height:20px;background:#c7c6e3"></div>
<div style="position:absolute;left:262.00px;top:582.54px;font:normal 18.5px/18.5px 'Liberation Sans', sans-serif;color:#111;letter-spacing:0.812px;white-space:nowrap;">TOTAL</div>
<div style="position:absolute;left:763.25px;top:582.79px;font:normal 18.5px/18.5px 'Liberation Sans', sans-serif;color:#111;letter-spacing:0.000px;white-space:nowrap;">12</div>
<div style="position:absolute;left:813.50px;top:582.79px;font:normal 18.5px/18.5px 'Liberation Sans', sans-serif;color:#111;letter-spacing:0.000px;white-space:nowrap;">422.70</div>
<div style="position:absolute;left:952.00px;top:582.09px;font:bold 18.5px/18.5px 'Liberation Sans', sans-serif;color:#111;letter-spacing:0.000px;white-space:nowrap;">-</div>
<div style="position:absolute;left:989.00px;top:582.79px;font:normal 18.5px/18.5px 'Liberation Sans', sans-serif;color:#111;letter-spacing:0.000px;white-space:nowrap;">422.70</div>
<div style="position:absolute;left:1125.60px;top:584.17px;font:normal 13.5px/13.5px 'Liberation Sans', sans-serif;color:#222;letter-spacing:0.000px;white-space:nowrap;transform:scaleX(0.92);transform-origin:right">0</div>
<div style="position:absolute;left:1184.25px;top:582.79px;font:normal 18.5px/18.5px 'Liberation Sans', sans-serif;color:#111;letter-spacing:0.000px;white-space:nowrap;">0.00</div>
<div style="position:absolute;left:1251.80px;top:582.79px;font:normal 18.5px/18.5px 'Liberation Sans', sans-serif;color:#111;letter-spacing:0.000px;white-space:nowrap;">422.70</div>
<div style="position:absolute;left:1369.95px;top:582.79px;font:normal 18.5px/18.5px 'Liberation Sans', sans-serif;color:#111;letter-spacing:0.000px;white-space:nowrap;">7.7</div>
<div style="position:absolute;left:1400px;top:578.5px;width:2px;height:24px;background:#dcdadf"></div>
<div style="position:absolute;left:236.70px;top:630.43px;font:bold 24px/24px 'Liberation Sans', sans-serif;color:#0a0a0a;letter-spacing:0.410px;white-space:nowrap;">BEAUTY</div>
<div style="position:absolute;left:234px;top:659.8px;width:1172px;height:25.5px;background:#dccb9b"></div>
<div style="position:absolute;left:260.80px;top:662.97px;font:normal 19px/19px 'Liberation Sans', sans-serif;color:#141414;letter-spacing:-0.221px;white-space:nowrap;">LIPSTICK</div>
<div style="position:absolute;left:758.80px;top:666.54px;font:bold 12px/12px 'Liberation Sans', sans-serif;color:#2a2418;letter-spacing:-0.150px;white-space:nowrap;">QTY</div>
<div style="position:absolute;left:830.00px;top:666.54px;font:bold 12px/12px 'Liberation Sans', sans-serif;color:#2a2418;letter-spacing:0.000px;white-space:nowrap;">SALES</div>
<div style="position:absolute;left:895.95px;top:666.54px;font:bold 12px/12px 'Liberation Sans', sans-serif;color:#2a2418;letter-spacing:-0.136px;white-space:nowrap;">DISCOUNT</div>
<div style="position:absolute;left:981.25px;top:666.54px;font:bold 12px/12px 'Liberation Sans', sans-serif;color:#2a2418;letter-spacing:0.000px;white-space:nowrap;">SUBTOTAL</div>
<div style="position:absolute;left:1067.85px;top:666.54px;font:bold 12px/12px 'Liberation Sans', sans-serif;color:#2a2418;letter-spacing:0.000px;white-space:nowrap;">AVG PRICE</div>
<div style="position:absolute;left:1186.25px;top:666.54px;font:bold 12px/12px 'Liberation Sans', sans-serif;color:#2a2418;letter-spacing:0.000px;white-space:nowrap;">COST</div>
<div style="position:absolute;left:1263.80px;top:666.54px;font:bold 12px/12px 'Liberation Sans', sans-serif;color:#2a2418;letter-spacing:0.000px;white-space:nowrap;">PROFIT</div>
<div style="position:absolute;left:1384.45px;top:666.54px;font:bold 12px/12px 'Liberation Sans', sans-serif;color:#2a2418;letter-spacing:0.000px;white-space:nowrap;">%</div>
<div style="position:absolute;left:286.45px;top:690.94px;font:bold 12px/12px 'Liberation Sans', sans-serif;color:#1e1e1e;letter-spacing:-0.128px;white-space:nowrap;">MAYBELLINE SUPER STAY LONG LASTING MATTE LIP TINT</div>
<div style="position:absolute;left:776.75px;top:690.42px;font:normal 12.5px/12.5px 'Liberation Sans', sans-serif;color:#222;letter-spacing:0.000px;white-space:nowrap;">1</div>
<div style="position:absolute;left:838.75px;top:690.42px;font:normal 12.5px/12.5px 'Liberation Sans', sans-serif;color:#222;letter-spacing:0.000px;white-space:nowrap;">15.00</div>
<div style="position:absolute;left:954.00px;top:690.42px;font:normal 12.5px/12.5px 'Liberation Sans', sans-serif;color:#222;letter-spacing:0.000px;white-space:nowrap;">-</div>
<div style="position:absolute;left:1014.25px;top:690.42px;font:normal 12.5px/12.5px 'Liberation Sans', sans-serif;color:#222;letter-spacing:0.000px;white-space:nowrap;">15.00</div>
<div style="position:absolute;left:1101.85px;top:690.42px;font:normal 12.5px/12.5px 'Liberation Sans', sans-serif;color:#222;letter-spacing:0.000px;white-space:nowrap;">15.00</div>
<div style="position:absolute;left:1188.75px;top:690.42px;font:normal 12.5px/12.5px 'Liberation Sans', sans-serif;color:#222;letter-spacing:0.000px;white-space:nowrap;">20.00</div>
<div style="position:absolute;left:1284.05px;top:690.42px;font:normal 12.5px/12.5px 'Liberation Sans', sans-serif;color:#222;letter-spacing:0.000px;white-space:nowrap;">0.00</div>
<div style="position:absolute;left:1370.95px;top:690.42px;font:normal 12.5px/12.5px 'Liberation Sans', sans-serif;color:#222;letter-spacing:0.000px;white-space:nowrap;">40.6</div>
<div style="position:absolute;left:1400px;top:688px;width:2px;height:17px;background:#e3e2ee"></div>
<div style="position:absolute;left:286.45px;top:712.84px;font:bold 12px/12px 'Liberation Sans', sans-serif;color:#1e1e1e;letter-spacing:-0.160px;white-space:nowrap;">MAYBELLINE SUPER STAY NUDE</div>
<div style="position:absolute;left:776.75px;top:712.32px;font:normal 12.5px/12.5px 'Liberation Sans', sans-serif;color:#222;letter-spacing:0.000px;white-space:nowrap;">1</div>
<div style="position:absolute;left:838.75px;top:712.32px;font:normal 12.5px/12.5px 'Liberation Sans', sans-serif;color:#222;letter-spacing:0.000px;white-space:nowrap;">12.00</div>
<div style="position:absolute;left:954.00px;top:712.32px;font:normal 12.5px/12.5px 'Liberation Sans', sans-serif;color:#222;letter-spacing:0.000px;white-space:nowrap;">-</div>
<div style="position:absolute;left:1014.25px;top:712.32px;font:normal 12.5px/12.5px 'Liberation Sans', sans-serif;color:#222;letter-spacing:0.000px;white-space:nowrap;">12.00</div>
<div style="position:absolute;left:1101.85px;top:712.32px;font:normal 12.5px/12.5px 'Liberation Sans', sans-serif;color:#222;letter-spacing:0.000px;white-space:nowrap;">12.00</div>
<div style="position:absolute;left:1188.75px;top:712.32px;font:normal 12.5px/12.5px 'Liberation Sans', sans-serif;color:#222;letter-spacing:0.000px;white-space:nowrap;">12.00</div>
<div style="position:absolute;left:1284.05px;top:712.32px;font:normal 12.5px/12.5px 'Liberation Sans', sans-serif;color:#222;letter-spacing:0.000px;white-space:nowrap;">0.00</div>
<div style="position:absolute;left:1370.70px;top:712.32px;font:normal 12.5px/12.5px 'Liberation Sans', sans-serif;color:#222;letter-spacing:0.000px;white-space:nowrap;">32.4</div>
<div style="position:absolute;left:1400px;top:709.9px;width:2px;height:17px;background:#e3e2ee"></div>
<div style="position:absolute;left:286.45px;top:734.74px;font:bold 12px/12px 'Liberation Sans', sans-serif;color:#1e1e1e;letter-spacing:-0.250px;white-space:nowrap;">NIVEA BLACKBERRY BALM</div>
<div style="position:absolute;left:776.75px;top:734.22px;font:normal 12.5px/12.5px 'Liberation Sans', sans-serif;color:#222;letter-spacing:0.000px;white-space:nowrap;">1</div>
<div style="position:absolute;left:845.75px;top:734.22px;font:normal 12.5px/12.5px 'Liberation Sans', sans-serif;color:#222;letter-spacing:0.000px;white-space:nowrap;">9.99</div>
<div style="position:absolute;left:954.00px;top:734.22px;font:normal 12.5px/12.5px 'Liberation Sans', sans-serif;color:#222;letter-spacing:0.000px;white-space:nowrap;">-</div>
<div style="position:absolute;left:1021.25px;top:734.22px;font:normal 12.5px/12.5px 'Liberation Sans', sans-serif;color:#222;letter-spacing:0.000px;white-space:nowrap;">9.99</div>
<div style="position:absolute;left:1108.85px;top:734.22px;font:normal 12.5px/12.5px 'Liberation Sans', sans-serif;color:#222;letter-spacing:0.000px;white-space:nowrap;">9.99</div>
<div style="position:absolute;left:1188.75px;top:734.22px;font:normal 12.5px/12.5px 'Liberation Sans', sans-serif;color:#222;letter-spacing:0.000px;white-space:nowrap;">15.00</div>
<div style="position:absolute;left:1284.05px;top:734.22px;font:normal 12.5px/12.5px 'Liberation Sans', sans-serif;color:#222;letter-spacing:0.000px;white-space:nowrap;">0.00</div>
<div style="position:absolute;left:1370.95px;top:734.22px;font:normal 12.5px/12.5px 'Liberation Sans', sans-serif;color:#222;letter-spacing:0.000px;white-space:nowrap;">27.0</div>
<div style="position:absolute;left:1400px;top:731.8px;width:2px;height:17px;background:#e3e2ee"></div>
</body></html>
